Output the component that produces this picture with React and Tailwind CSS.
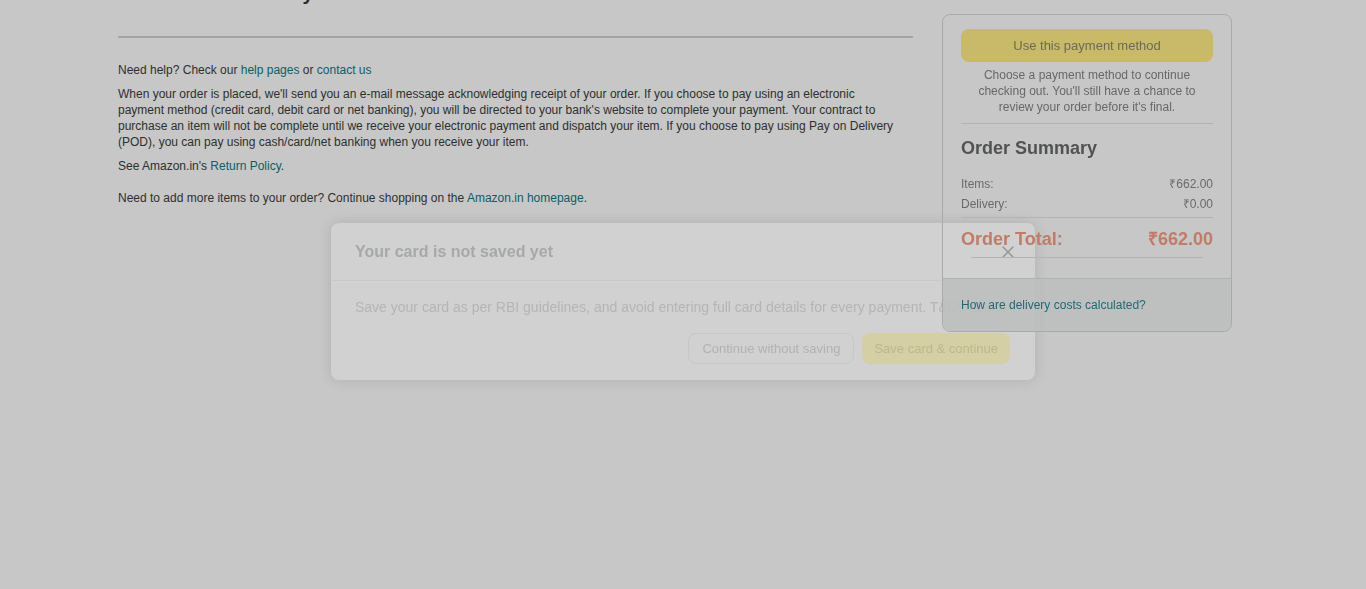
import { X } from "lucide-react";

const font = { fontFamily: '"Liberation Sans", Arial, sans-serif' };

const Sidebar = () => (
  <aside className="relative z-20 mt-[14px] w-[290px] shrink-0 self-start rounded-lg border border-[#a9abab]">
    <div className="px-[18px] pt-[14px]">
      <button className="h-[33px] w-full rounded-lg bg-[#c8ba68] text-[13px] text-[#6d6a52]">
        Use this payment method
      </button>
      <p className="mt-[5px] text-center text-[12px] leading-4 text-[#676868]">
        Choose a payment method to continue checking out. You'll still have a chance to review your order before it's final.
      </p>
      <div className="mt-[8px] h-px bg-[#b2b4b4]" />
      <h3 className="mt-[12px] text-[18px] font-bold leading-6 text-[#525353]">Order Summary</h3>
      <div className="mt-[14px] flex justify-between text-[12px] leading-5 text-[#696a6a]">
        <span>Items:</span>
        <span>₹662.00</span>
      </div>
      <div className="flex justify-between text-[12px] leading-5 text-[#696a6a]">
        <span>Delivery:</span>
        <span>₹0.00</span>
      </div>
      <div className="mt-[3px] h-px bg-[#b2b4b4]" />
      <div className="mt-[9px] flex justify-between text-[18px] font-bold leading-6 text-[#c07c69]">
        <span>Order Total:</span>
        <span>₹662.00</span>
      </div>
      <div className="mx-[10px] mt-[6px] h-px bg-[#b2b4b4]" />
    </div>
    <div className="mt-[20px] flex h-[53px] items-center rounded-b-lg border-t border-[#b0b2b2] bg-[#bcbfbf]/90 px-[18px] text-[12px] text-[#1c6a74]">
      How are delivery costs calculated?
    </div>
  </aside>
);

const Modal = () => (
  <div className="fixed inset-0 z-10 flex items-start justify-start pl-[331px] pt-[223px]">
    <div className="w-[704px] rounded-lg bg-[#d0d1d0] shadow-[0_0_14px_rgba(0,0,0,0.12)]">
      <div className="flex h-[58px] items-center justify-between border-b border-[#c8c9c8] pl-[24px] pr-[17px] pt-[1px]">
        <h2 className="text-[16px] font-bold text-[#a7a8a8]">Your card is not saved yet</h2>
        <X className="h-[20px] w-[20px] text-[#959696]" strokeWidth={1.75} />
      </div>
      <div className="px-[24px] pb-[16px] pt-[16px]">
        <p className="text-[14px] leading-5 text-[#b4b5b4]">
          Save your card as per RBI guidelines, and avoid entering full card details for every payment. T&amp;Cs apply.
        </p>
        <div className="mt-[16px] flex justify-end gap-[8px] pr-[1px]">
          <button className="h-[31px] rounded-lg border border-[#c6c7c6] px-[13px] text-[13px] text-[#b1b2b1]">
            Continue without saving
          </button>
          <button className="h-[31px] rounded-lg bg-[#d5cfa5] px-[12px] text-[13px] text-[#bfb78c]">
            Save card &amp; continue
          </button>
        </div>
      </div>
    </div>
  </div>
);

export default function App() {
  return (
    <div style={font} className="h-[589px] overflow-hidden bg-[#c6c7c6] text-[#2e2f2f]">
      <div className="flex gap-[29px] pl-[118px]">
        <main className="w-[795px] shrink-0">
          <h1 className="-mt-[21px] flex gap-[10px] text-[20px] font-bold leading-7 text-[#2b2c2c]">
            <span>3</span>
            <span>Items and delivery</span>
          </h1>
          <div className="mt-[29px] h-[2px] bg-[#a3a4a3]" />
          <p className="mt-[24px] text-[12px] leading-4">
            Need help? Check our <span className="text-[#0d5d69]">help pages</span> or{" "}
            <span className="text-[#0d5d69]">contact us</span>
          </p>
          <p className="mt-[8px] text-[12px] leading-4">
            When your order is placed, we'll send you an e-mail message acknowledging receipt of your order. If you choose to pay using an electronic
            <br />
            payment method (credit card, debit card or net banking), you will be directed to your bank's website to complete your payment. Your contract to
            <br />
            purchase an item will not be complete until we receive your electronic payment and dispatch your item. If you choose to pay using Pay on Delivery
            <br />
            (POD), you can pay using cash/card/net banking when you receive your item.
          </p>
          <p className="mt-[8px] text-[12px] leading-4">
            See Amazon.in's <span className="text-[#0d5d69]">Return Policy</span>.
          </p>
          <p className="mt-[16px] text-[12px] leading-4">
            Need to add more items to your order? Continue shopping on the{" "}
            <span className="text-[#0d5d69]">Amazon.in homepage</span>.
          </p>
        </main>
        <Sidebar />
      </div>
      <Modal />
    </div>
  );
}
